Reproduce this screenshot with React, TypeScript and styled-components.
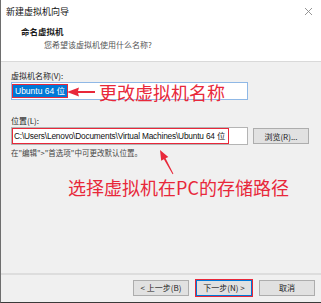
import React from 'react';
import styled, { createGlobalStyle } from 'styled-components';

const GlobalStyle = createGlobalStyle`
  html, body {
    margin: 0;
    padding: 0;
    background: #ffffff;
  }
  body {
    font-family: "Noto Sans CJK SC", "Liberation Sans", sans-serif;
  }
`;

const latin = `"Liberation Sans", "Noto Sans CJK SC", sans-serif`;
const cjk = `"Noto Sans CJK SC", "Liberation Sans", sans-serif`;
const red = '#e8283a';

const Window = styled.div`
  width: 321px;
  height: 303px;
  box-sizing: border-box;
  display: flex;
  flex-direction: column;
  border-left: 1px solid #6e6e6e;
  border-bottom: 1px solid #3a3a3a;
  overflow: hidden;
`;

const Header = styled.div`
  height: 62px;
  box-sizing: border-box;
  background: #ffffff;
  border-bottom: 1px solid #d9d9d9;
  display: flex;
  flex-direction: column;
`;

const TitleBar = styled.div`
  height: 22px;
  display: flex;
  align-items: center;
  justify-content: space-between;
  padding: 0 8px 0 5px;
  font-family: ${cjk};
  font-size: 9px;
  color: #111;
`;

const CloseIcon = () => (
  <svg width="9" height="9" viewBox="0 0 9 9">
    <path d="M1 1 L8 8 M8 1 L1 8" stroke="#8a8a8a" strokeWidth="0.9" fill="none" />
  </svg>
);

const Heading = styled.div`
  padding: 3px 0 0 20px;
  font-family: ${cjk};
  font-size: 8.5px;
  font-weight: 700;
  line-height: 12px;
  color: #1a1a1a;
`;

const SubHeading = styled.div`
  padding: 2px 0 0 43px;
  font-family: ${cjk};
  font-size: 8px;
  line-height: 12px;
  color: #555;
`;

const Body = styled.div`
  position: relative;
  flex: 1;
  background: #f0f0f0;
  padding: 8px 0 0 10px;
  display: flex;
  flex-direction: column;
`;

const Label = styled.div<{ $gap?: number }>`
  margin-top: ${(p) => p.$gap ?? 0}px;
  font-family: ${cjk};
  font-size: 8px;
  line-height: 12px;
  color: #222;
`;

const Row = styled.div`
  display: flex;
  align-items: center;
  gap: 5px;
`;

const TextBox = styled.div<{ $focused?: boolean }>`
  flex: none;
  width: 237px;
  height: 18px;
  box-sizing: border-box;
  background: #ffffff;
  border: 1px solid ${(p) => (p.$focused ? '#8fb8e6' : '#b4b4b4')};
  display: flex;
  align-items: center;
  padding-left: 1px;
  font-family: ${latin};
  font-size: 8.5px;
  color: #111;
  white-space: nowrap;
`;

const Selected = styled.span`
  background: #0078d7;
  color: #ffffff;
  padding: 0 2px;
  line-height: 12px;
  outline: 1.5px solid ${red};
  outline-offset: 0.5px;
`;

const Boxed = styled.span`
  border: 1.5px solid ${red};
  padding: 1px 3px 1px 1px;
  margin-left: -1px;
  line-height: 12px;
  font-size: 8.3px;
  letter-spacing: -0.18px;
`;

const Button = styled.div<{ $default?: boolean }>`
  flex: none;
  width: 56px;
  height: 16px;
  box-sizing: border-box;
  background: #e1e1e1;
  border: 1px solid ${(p) => (p.$default ? '#0078d7' : '#adadad')};
  outline: ${(p) => (p.$default ? `1.5px solid ${red}` : 'none')};
  outline-offset: 0.5px;
  display: flex;
  align-items: center;
  justify-content: center;
  font-family: ${cjk};
  font-size: 8px;
  color: #222;
`;

const Hint = styled.div`
  margin-top: 2px;
  font-family: ${cjk};
  font-size: 7.5px;
  line-height: 12px;
  color: #444;
`;

const Note = styled.div<{ $left: number; $top: number }>`
  position: absolute;
  left: ${(p) => p.$left}px;
  top: ${(p) => p.$top}px;
  font-family: ${cjk};
  font-size: 18px;
  line-height: 18px;
  color: ${red};
  white-space: nowrap;
`;

const Arrow = styled.svg<{ $left: number; $top: number }>`
  position: absolute;
  left: ${(p) => p.$left}px;
  top: ${(p) => p.$top}px;
`;

const Footer = styled.div`
  height: 25px;
  background: #f0f0f0;
  border-top: 2px solid #dddddd;
  display: flex;
  align-items: center;
  justify-content: flex-end;
  gap: 7px;
  padding: 0 6px 2px 0;
`;

const App = () => (
  <>
    <GlobalStyle />
    <Window>
      <Header>
        <TitleBar>
          <span>新建虚拟机向导</span>
          <CloseIcon />
        </TitleBar>
        <Heading>命名虚拟机</Heading>
        <SubHeading>您希望该虚拟机使用什么名称?</SubHeading>
      </Header>

      <Body>
        <Label>虚拟机名称(V):</Label>
        <TextBox $focused>
          <Selected>Ubuntu 64 位</Selected>
        </TextBox>

        <Label $gap={15}>位置(L):</Label>
        <Row>
          <TextBox>
            <Boxed>C:\Users\Lenovo\Documents\Virtual Machines\Ubuntu 64 位</Boxed>
          </TextBox>
          <Button>浏览(R)...</Button>
        </Row>
        <Hint>在"编辑"&gt;"首选项"中可更改默认位置。</Hint>

        <Arrow $left={65} $top={24} width="30" height="12" viewBox="0 0 30 12">
          <polygon points="1,6 13,1.5 12,5 29,5 29,7 12,7 13,10.5" fill={red} />
        </Arrow>
        <Note $left={98} $top={21}>更改虚拟机名称</Note>

        <Arrow $left={153} $top={85} width="22" height="30" viewBox="0 0 22 30">
          <polygon
            points="6,3 14.3,9.9 11.6,11.3 19.4,26.8 18.6,27.2 9.9,12.3 7.2,13.7"
            fill={red}
          />
        </Arrow>
        <Note $left={67} $top={116}>选择虚拟机在PC的存储路径</Note>
      </Body>

      <Footer>
        <Button>&lt; 上一步(B)</Button>
        <Button $default>下一步(N) &gt;</Button>
        <Button>取消</Button>
      </Footer>
    </Window>
  </>
);

export default App;
